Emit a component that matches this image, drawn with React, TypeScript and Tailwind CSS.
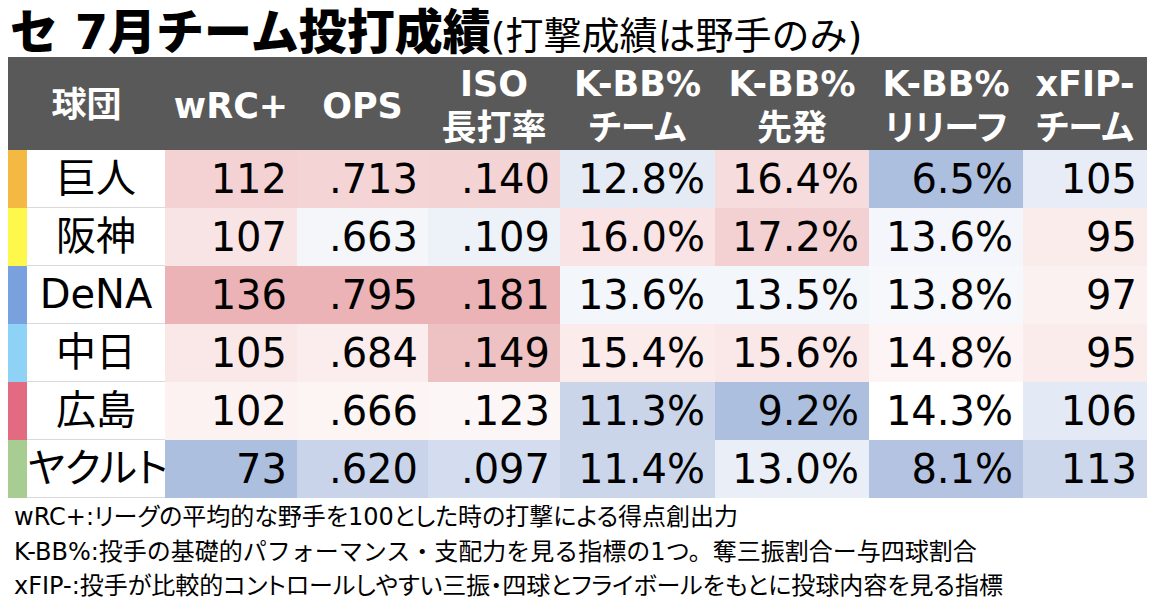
import React from 'react';

type Cell = [string, string];

interface TeamRow {
  name: string;
  bar: string;
  cells: Cell[];
}

const rows: TeamRow[] = [
  {
    name: '巨人',
    bar: 'bg-[#f4b942]',
    cells: [
      ['112', 'bg-[#f4d2d3]'],
      ['.713', 'bg-[#f4d4d5]'],
      ['.140', 'bg-[#f3d3d4]'],
      ['12.8%', 'bg-[#e5ebf5]'],
      ['16.4%', 'bg-[#f7dcdd]'],
      ['6.5%', 'bg-[#adbfdf]'],
      ['105', 'bg-[#e7ecf6]'],
    ],
  },
  {
    name: '阪神',
    bar: 'bg-[#fef84c]',
    cells: [
      ['107', 'bg-[#f9e4e5]'],
      ['.663', 'bg-[#f4f6fa]'],
      ['.109', 'bg-[#edf1f8]'],
      ['16.0%', 'bg-[#f9e3e4]'],
      ['17.2%', 'bg-[#f3d1d2]'],
      ['13.6%', 'bg-[#f4f6fb]'],
      ['95', 'bg-[#fbecec]'],
    ],
  },
  {
    name: 'DeNA',
    bar: 'bg-[#79a1dd]',
    cells: [
      ['136', 'bg-[#ebb3b5]'],
      ['.795', 'bg-[#ebb3b5]'],
      ['.181', 'bg-[#ebb3b5]'],
      ['13.6%', 'bg-[#f3f6fa]'],
      ['13.5%', 'bg-[#f3f6fa]'],
      ['13.8%', 'bg-[#f6f8fb]'],
      ['97', 'bg-[#fcf1f1]'],
    ],
  },
  {
    name: '中日',
    bar: 'bg-[#8ed2f6]',
    cells: [
      ['105', 'bg-[#fae8e9]'],
      ['.684', 'bg-[#fbeded]'],
      ['.149', 'bg-[#eec1c2]'],
      ['15.4%', 'bg-[#fbebeb]'],
      ['15.6%', 'bg-[#fae8e9]'],
      ['14.8%', 'bg-[#fdf5f5]'],
      ['95', 'bg-[#fbecec]'],
    ],
  },
  {
    name: '広島',
    bar: 'bg-[#e26b82]',
    cells: [
      ['102', 'bg-[#fdf2f2]'],
      ['.666', 'bg-[#fdf4f4]'],
      ['.123', 'bg-[#fdf6f6]'],
      ['11.3%', 'bg-[#cad5ea]'],
      ['9.2%', 'bg-[#adbfdf]'],
      ['14.3%', 'bg-[#ffffff]'],
      ['106', 'bg-[#e4eaf5]'],
    ],
  },
  {
    name: 'ヤクルト',
    bar: 'bg-[#a8cd93]',
    cells: [
      ['73', 'bg-[#adbfdf]'],
      ['.620', 'bg-[#c9d4ea]'],
      ['.097', 'bg-[#d4ddef]'],
      ['11.4%', 'bg-[#ccd6eb]'],
      ['13.0%', 'bg-[#e9eef7]'],
      ['8.1%', 'bg-[#b3c3e1]'],
      ['113', 'bg-[#ccd7eb]'],
    ],
  },
];

// header labels; second line is optional
const headers: [string, string?][] = [
  ['wRC+'],
  ['OPS'],
  ['ISO', '長打率'],
  ['K-BB%', 'チーム'],
  ['K-BB%', '先発'],
  ['K-BB%', 'リリーフ'],
  ['xFIP-', 'チーム'],
];

// palt narrows kana; the middle note keeps full-width punctuation like the original
const notes: { text: string; tight: boolean }[] = [
  { text: 'wRC+:リーグの平均的な野手を100とした時の打撃による得点創出力', tight: true },
  { text: 'K-BB%:投手の基礎的パフォーマンス・支配力を見る指標の1つ。奪三振割合ー与四球割合', tight: false },
  { text: 'xFIP-:投手が比較的コントロールしやすい三振・四球とフライボールをもとに投球内容を見る指標', tight: true },
];

export default function App() {
  return (
    <div className="w-[1157px] h-[612px] bg-white pl-2 overflow-hidden font-['DejaVu_Sans','Noto_Sans_CJK_JP',sans-serif] text-black">
      <div className="h-[57px] pt-[7px] pl-[2px]">
        <h1 className="leading-[50px] whitespace-nowrap">
          <span className="text-[48px] font-black">セ 7月チーム投打成績</span>
          <span className="text-[38px] font-normal">(打撃成績は野手のみ)</span>
        </h1>
      </div>

      <div className="grid grid-cols-[19px_138px_132px_131px_132px_155px_154px_154px_124px]">
        <div className="col-span-2 h-[93px] bg-[#595959] text-white font-bold text-[35px] flex items-center justify-center pt-[4px] [font-feature-settings:'palt']">
          球団
        </div>
        {headers.map(([top, bottom], i) => (
          <div
            key={i}
            className="h-[93px] bg-[#595959] text-white font-bold text-[35px] leading-[44px] flex flex-col items-center justify-center pt-[4px] whitespace-nowrap [font-feature-settings:'palt']"
          >
            <span>{top}</span>
            {bottom && <span>{bottom}</span>}
          </div>
        ))}

        {rows.map((row) => (
          <React.Fragment key={row.name}>
            <div className={`h-[58px] ${row.bar}`} />
            <div className="h-[58px] bg-white border-b border-[#dadada] text-[40px] leading-[57px] text-center whitespace-nowrap [font-feature-settings:'palt']">
              {row.name}
            </div>
            {row.cells.map(([value, bg], i) => (
              <div
                key={i}
                className={`h-[58px] ${bg} text-[40px] leading-[58px] text-right pr-[10px] whitespace-nowrap`}
              >
                {value}
              </div>
            ))}
          </React.Fragment>
        ))}
      </div>

      <div className="pt-[2px] pl-[6px] text-[24px] leading-[34.5px]">
        {notes.map((n) => (
          <p
            key={n.text}
            className={n.tight ? "whitespace-nowrap [font-feature-settings:'palt']" : 'whitespace-nowrap'}
          >
            {n.text}
          </p>
        ))}
      </div>
    </div>
  );
}
